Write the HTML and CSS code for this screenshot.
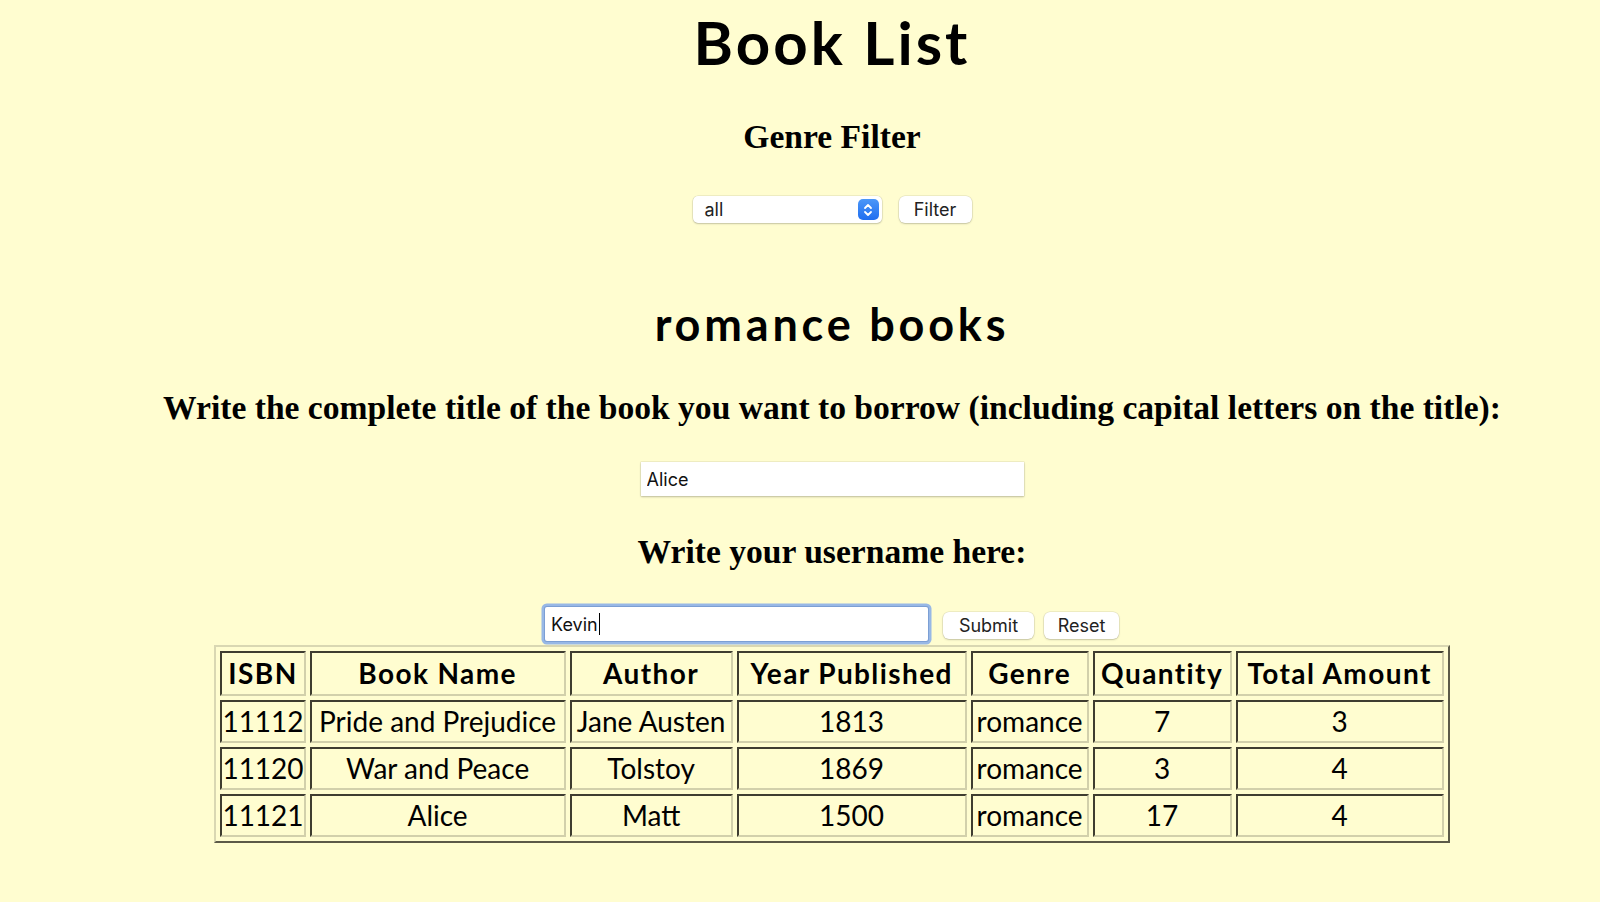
FILE: index.html
```html
<!DOCTYPE html>
<html lang="en">
<head>
<meta charset="utf-8">
<title>Book List</title>
<link rel="stylesheet" href="styles.css">
</head>
<body>
<main class="page">
  <h1 class="title">Book List</h1>
  <h2 class="subhead">Genre Filter</h2>
  <form class="filter-row">
    <div class="select">
      <span class="select-value">all</span>
      <span class="stepper">
        <svg width="12" height="16" viewBox="0 0 12 16" aria-hidden="true">
          <path d="M3 6 L6 3 L9 6" fill="none" stroke="#fff" stroke-width="1.8" stroke-linecap="round" stroke-linejoin="round"/>
          <path d="M3 10 L6 13 L9 10" fill="none" stroke="#fff" stroke-width="1.8" stroke-linecap="round" stroke-linejoin="round"/>
        </svg>
      </span>
    </div>
    <button type="button" class="btn btn-filter">Filter</button>
  </form>

  <h1 class="section-title">romance books</h1>
  <h2 class="prompt prompt-title">Write the complete title of the book you want to borrow (including capital letters on the title):</h2>
  <div class="field-row">
    <input class="text-input" type="text" value="Alice">
  </div>
  <h2 class="prompt prompt-user">Write your username here:</h2>
  <div class="user-row">
    <div class="text-input focused"><span>Kevin</span><span class="caret"></span></div>
    <button type="button" class="btn btn-submit">Submit</button>
    <button type="button" class="btn btn-reset">Reset</button>
  </div>

  <table class="books">
    <thead>
      <tr>
        <th class="c-isbn">ISBN</th>
        <th class="c-name">Book Name</th>
        <th class="c-author">Author</th>
        <th class="c-year">Year Published</th>
        <th class="c-genre">Genre</th>
        <th class="c-qty">Quantity</th>
        <th class="c-total">Total Amount</th>
      </tr>
    </thead>
    <tbody>
      <tr>
        <td>11112</td><td>Pride and Prejudice</td><td>Jane Austen</td><td>1813</td><td>romance</td><td>7</td><td>3</td>
      </tr>
      <tr>
        <td>11120</td><td>War and Peace</td><td>Tolstoy</td><td>1869</td><td>romance</td><td>3</td><td>4</td>
      </tr>
      <tr>
        <td>11121</td><td>Alice</td><td>Matt</td><td>1500</td><td>romance</td><td>17</td><td>4</td>
      </tr>
    </tbody>
  </table>
</main>
</body>
</html>
```

FILE: styles.css
```css
html, body {
  margin: 0;
  padding: 0;
}
body {
  background: #fffdd0;
  color: #000;
  font-family: "Liberation Serif", "Times New Roman", serif;
}
.page {
  padding-left: 64px;
  text-align: center;
}
.title {
  margin: 2px 0 0;
  font-family: Lato, "DejaVu Sans", sans-serif;
  font-weight: 700;
  font-size: 60px;
  line-height: 80px;
  letter-spacing: 3px;
}
.subhead {
  margin: 35px 0 0;
  font-size: 33.6px;
  line-height: 40px;
  font-weight: 700;
}
.filter-row {
  margin: 39px 0 0;
  display: flex;
  justify-content: center;
  align-items: center;
  gap: 17px;
  height: 27px;
}
.select {
  box-sizing: border-box;
  width: 189px;
  height: 27px;
  background: #fff;
  border-radius: 5px;
  box-shadow: 0 0 0 0.5px rgba(0,0,0,0.12), 0 1px 2px rgba(0,0,0,0.18);
  display: flex;
  align-items: center;
  justify-content: space-between;
  padding: 0 3px 0 12px;
  font-family: Inter, "Liberation Sans", sans-serif;
  font-size: 18px;
  color: #222;
}
.stepper {
  width: 21px;
  height: 21px;
  border-radius: 5px;
  background: linear-gradient(#4b97f8, #1f6ef0);
  display: flex;
  align-items: center;
  justify-content: center;
}
.btn {
  box-sizing: border-box;
  height: 27px;
  padding: 0;
  background: #fff;
  border: none;
  border-radius: 6px;
  box-shadow: 0 0 0 0.5px rgba(0,0,0,0.12), 0 1px 2px rgba(0,0,0,0.18);
  font-family: Inter, "Liberation Sans", sans-serif;
  font-size: 18px;
  color: #222;
}
.btn-filter { width: 73px; }
.section-title {
  margin: 73px 0 0;
  font-family: Lato, "DejaVu Sans", sans-serif;
  font-weight: 700;
  font-size: 45px;
  line-height: 56px;
  letter-spacing: 3.8px;
}
.prompt {
  font-size: 33.6px;
  line-height: 40px;
  font-weight: 700;
}
.prompt-title { margin: 36px 0 0; }
.prompt-user { margin: 36px 0 0; }
.field-row {
  margin-top: 34px;
  display: flex;
  justify-content: center;
}
.text-input {
  box-sizing: border-box;
  width: 383px;
  height: 34px;
  margin: 0;
  padding: 0 6px;
  background: #fff;
  border: none;
  box-shadow: 0 0 0 0.5px rgba(0,0,0,0.1), 0 1px 2px rgba(0,0,0,0.22);
  font-family: Inter, "Liberation Sans", sans-serif;
  font-size: 18px;
  color: #111;
  text-align: left;
  outline: none;
}
.user-row {
  margin-top: 35px;
  display: flex;
  justify-content: center;
  align-items: flex-start;
  height: 34px;
}
.text-input.focused {
  display: flex;
  align-items: center;
  border-radius: 2px;
  box-shadow: 0 0 0 1px #7c9fd4, 0 0 0 3.5px #98b8e6;
}
.caret {
  display: inline-block;
  width: 1px;
  height: 22px;
  background: #000;
  margin-left: 1px;
}
.btn-submit {
  width: 91px;
  margin: 5px 0 0 15px;
}
.btn-reset {
  width: 75px;
  margin: 5px 0 0 10px;
}
.books {
  margin: 4px auto 0;
  table-layout: fixed;
  border-collapse: separate;
  border-spacing: 4px;
  border: 2px solid;
  border-color: #d9d7b2 #5c5a48 #5c5a48 #d9d7b2;
  font-family: Lato, "DejaVu Sans", sans-serif;
  font-size: 28px;
}
.books th, .books td {
  padding: 0;
  border: 2px solid;
  border-color: #3f3d30 #d2d0ab #d2d0ab #3f3d30;
  text-align: center;
  white-space: nowrap;
}
.books th {
  font-weight: 700;
  line-height: 41px;
  letter-spacing: 1.4px;
}
.books td {
  font-weight: 400;
  line-height: 39px;
  letter-spacing: 0;
}
.c-isbn { width: 80px; }
.c-name { width: 252px; }
.c-author { width: 159px; }
.c-year { width: 226px; }
.c-genre { width: 114px; }
.c-qty { width: 135px; }
.c-total { width: 204px; }
```
